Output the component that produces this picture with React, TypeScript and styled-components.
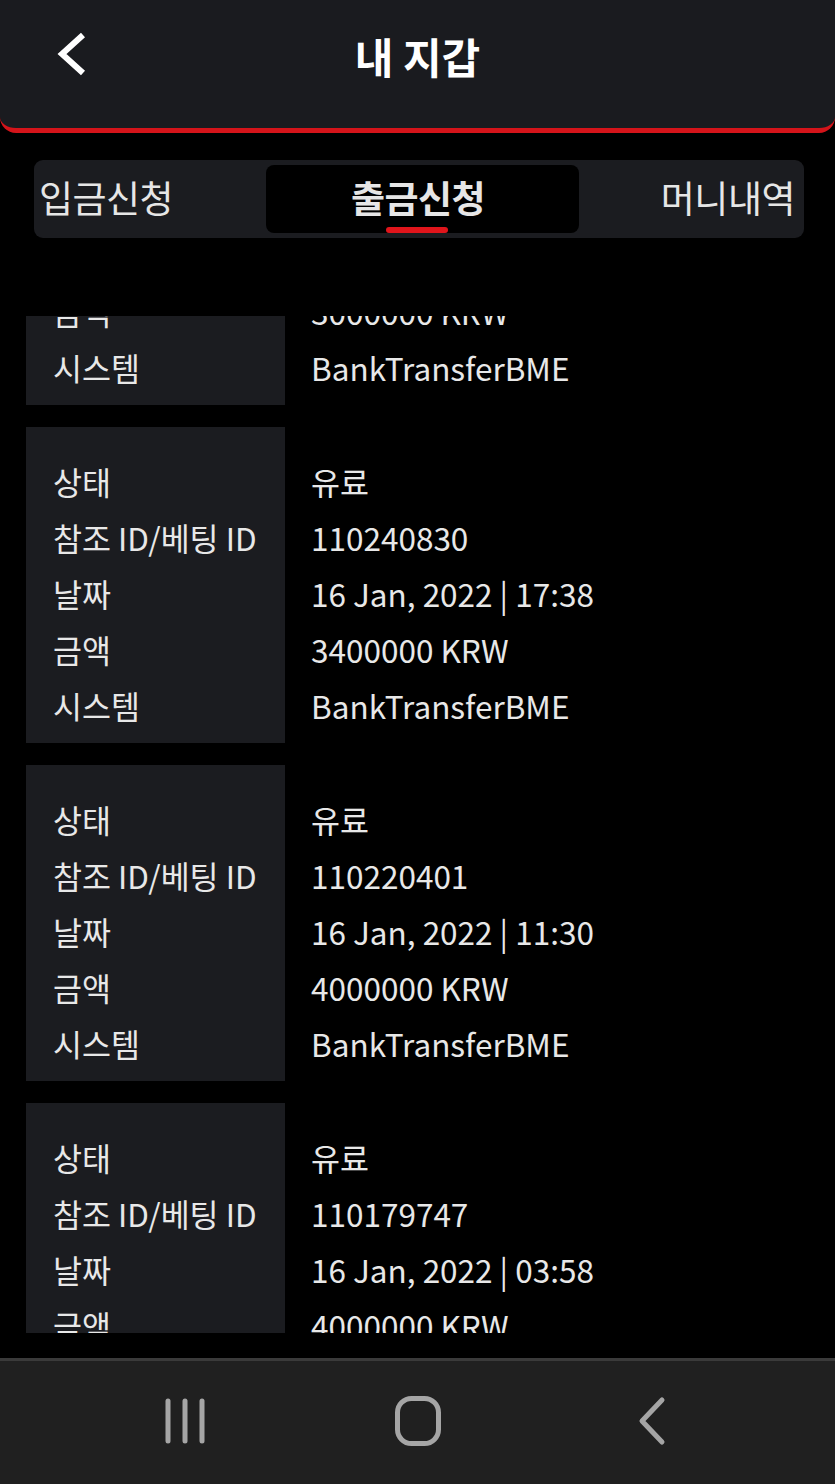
import React from "react";
import styled, { createGlobalStyle } from "styled-components";

const GlobalStyle = createGlobalStyle`
  html, body { margin: 0; padding: 0; background: #000; }
  body { font-family: "Noto Sans CJK KR", "Noto Sans", sans-serif; color: #e8e8e8; }
  * { box-sizing: border-box; }
`;

const Page = styled.div`
  width: 835px;
  height: 1484px;
  background: #000;
  display: flex;
  flex-direction: column;
  overflow: hidden;
`;

const Header = styled.header`
  height: 133px;
  flex: none;
  background: #1a1b1f;
  border-bottom: 5px solid #d4141a;
  border-radius: 0 0 16px 16px;
  display: grid;
  grid-template-columns: 140px 1fr 140px;
  align-items: start;
  padding-top: 20px;
`;

const BackButton = styled.div`
  display: flex;
  justify-content: flex-start;
  padding-top: 11px;
  padding-left: 56px;
`;

const Title = styled.h1`
  margin: 0;
  text-align: center;
  font-size: 42px;
  font-weight: 700;
  line-height: 72px;
  color: #fff;
`;

const TabBar = styled.nav`
  margin: 27px 31px 0 34px;
  height: 78px;
  flex: none;
  background: #1b1c20;
  border-radius: 9px;
  display: grid;
  grid-template-columns: 227px 313px 1fr;
  align-items: center;
  padding: 5px 9px 5px 5px;
`;

const Tab = styled.div<{ $active?: boolean; $align?: string }>`
  position: relative;
  height: 68px;
  display: flex;
  align-items: center;
  justify-content: ${(p) => p.$align || "flex-start"};
  font-size: 37px;
  font-weight: ${(p) => (p.$active ? 700 : 400)};
  color: #e6e6e6;
  background: ${(p) => (p.$active ? "#000" : "transparent")};
  border-radius: 8px;
  padding: 0 ${(p) => (p.$active ? "9px" : "0")} 4px 0;
  letter-spacing: -0.5px;
`;

const Underline = styled.span`
  position: absolute;
  left: 120px;
  bottom: 0;
  width: 62px;
  height: 6px;
  border-radius: 3px;
  background: #e0151b;
`;

const ListWindow = styled.div`
  margin-top: 78px;
  height: 1017px;
  flex: none;
  overflow: hidden;
`;

const List = styled.div`
  margin-top: -227px;
  display: flex;
  flex-direction: column;
  gap: 22px;
  padding: 0 0 0 26px;
`;

const Card = styled.div`
  display: grid;
  grid-template-columns: 259px 1fr;
`;

const Labels = styled.div`
  background: #1b1c20;
  padding: 26px 0 10px 27px;
`;

const Values = styled.div`
  padding: 26px 0 10px 26px;
`;

const Line = styled.div`
  height: 56px;
  line-height: 56px;
  font-size: 31.5px;
  color: #e8e8e8;
  white-space: nowrap;
`;

const BottomNav = styled.div`
  margin-top: 25px;
  flex: 1;
  background: #202020;
  border-top: 3px solid #3a3a3a;
  display: grid;
  grid-template-columns: 1fr 1fr 1fr;
  align-items: center;
  padding: 0 68px 4px 68px;
`;

const NavSlot = styled.div`
  display: flex;
  justify-content: center;
`;

const records = [
  { state: "유료", id: "110260000", date: "16 Jan, 2022 | 20:00", amount: "3000000 KRW" },
  { state: "유료", id: "110240830", date: "16 Jan, 2022 | 17:38", amount: "3400000 KRW" },
  { state: "유료", id: "110220401", date: "16 Jan, 2022 | 11:30", amount: "4000000 KRW" },
  { state: "유료", id: "110179747", date: "16 Jan, 2022 | 03:58", amount: "4000000 KRW" },
];

const labels = ["상태", "참조 ID/베팅 ID", "날짜", "금액", "시스템"];

export default function App() {
  return (
    <Page>
      <GlobalStyle />
      <Header>
        <BackButton>
          <svg width="32" height="46" viewBox="0 0 32 46">
            <path d="M27 4 L6 23 L27 42" fill="none" stroke="#fff" strokeWidth="6" strokeLinecap="butt" strokeLinejoin="miter" />
          </svg>
        </BackButton>
        <Title>내 지갑</Title>
        <div />
      </Header>
      <TabBar>
        <Tab>입금신청</Tab>
        <Tab $active $align="center">
          출금신청
          <Underline />
        </Tab>
        <Tab $align="flex-end">머니내역</Tab>
      </TabBar>
      <ListWindow>
        <List>
          {records.map((r) => (
            <Card key={r.id}>
              <Labels>
                {labels.map((l) => (
                  <Line key={l}>{l}</Line>
                ))}
              </Labels>
              <Values>
                <Line>{r.state}</Line>
                <Line>{r.id}</Line>
                <Line>{r.date}</Line>
                <Line>{r.amount}</Line>
                <Line>BankTransferBME</Line>
              </Values>
            </Card>
          ))}
        </List>
      </ListWindow>
      <BottomNav>
        <NavSlot>
          <svg width="44" height="48" viewBox="0 0 44 48">
            <g stroke="#a5a5a5" strokeWidth="5" strokeLinecap="round">
              <line x1="5" y1="4" x2="5" y2="44" />
              <line x1="22" y1="4" x2="22" y2="44" />
              <line x1="39" y1="4" x2="39" y2="44" />
            </g>
          </svg>
        </NavSlot>
        <NavSlot>
          <svg width="48" height="52" viewBox="0 0 48 52">
            <rect x="3.5" y="3.5" width="41" height="45" rx="14" fill="none" stroke="#a5a5a5" strokeWidth="5" />
          </svg>
        </NavSlot>
        <NavSlot>
          <svg width="32" height="50" viewBox="0 0 32 50">
            <path d="M27 4 L7 25 L27 46" fill="none" stroke="#a5a5a5" strokeWidth="5" strokeLinecap="round" strokeLinejoin="round" />
          </svg>
        </NavSlot>
      </BottomNav>
    </Page>
  );
}
